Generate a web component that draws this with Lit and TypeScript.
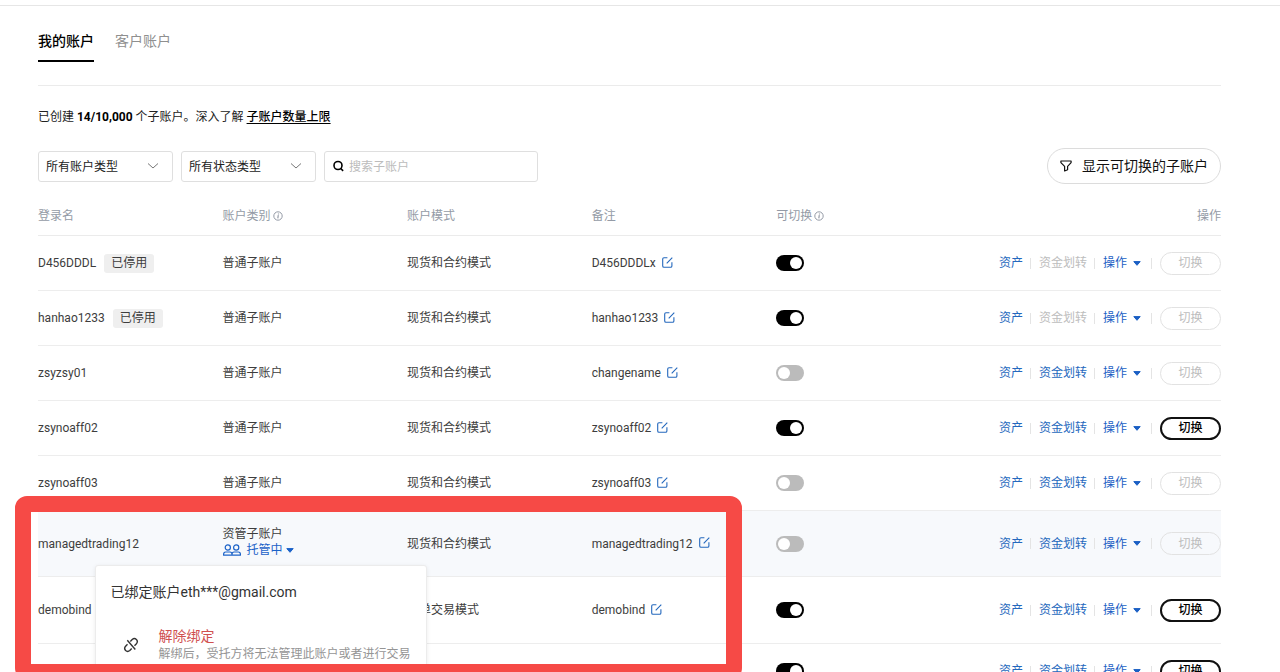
import { LitElement, html, css, svg, nothing } from "lit";
import { customElement, property, state } from "lit/decorators.js";
import { classMap } from "lit/directives/class-map.js";

interface Account {
  login: string;
  disabled?: boolean;
  kind: "" | "普通子账户" | "资管子账户";
  mode: string;
  note: string;
  switchable: boolean;
  transfer: boolean;
  canSwitch: boolean;
  size?: "tall" | "taller";
}

const PLAIN = "普通子账户";
const MANAGED = "资管子账户";
const SPOT = "现货和合约模式";
const ACCOUNTS: Account[] = [
  { login: "D456DDDL", disabled: true, kind: PLAIN, mode: SPOT, note: "D456DDDLx", switchable: true, transfer: false, canSwitch: false },
  { login: "hanhao1233", disabled: true, kind: PLAIN, mode: SPOT, note: "hanhao1233", switchable: true, transfer: false, canSwitch: false },
  { login: "zsyzsy01", kind: PLAIN, mode: SPOT, note: "changename", switchable: false, transfer: true, canSwitch: false },
  { login: "zsynoaff02", kind: PLAIN, mode: SPOT, note: "zsynoaff02", switchable: true, transfer: true, canSwitch: true },
  { login: "zsynoaff03", kind: PLAIN, mode: SPOT, note: "zsynoaff03", switchable: false, transfer: true, canSwitch: false },
  { login: "managedtrading12", kind: MANAGED, mode: SPOT, note: "managedtrading12", switchable: false, transfer: true, canSwitch: false, size: "tall" },
  { login: "demobind", kind: "", mode: "跟单交易模式", note: "demobind", switchable: true, transfer: true, canSwitch: true, size: "taller" },
  { login: "", kind: "", mode: "", note: "", switchable: true, transfer: true, canSwitch: true },
];

const SHAPES = {
  chevron: { w: 12, h: 6, body: svg`<path d="M1 .5 6 5 11 .5" stroke-width="1"/>` },
  caret: { w: 8, h: 5, body: svg`<path d="M.8.6h6.4L4 4.3z" fill="currentColor" stroke-width="1" stroke-linejoin="round"/>` },
  search: { w: 11, h: 12, body: svg`<circle cx="5" cy="5.5" r="4" stroke-width="1.6"/><path d="m7.800 8.500 2.300 2.400" stroke-width="1.6"/>` },
  filter: { w: 12, h: 12, body: svg`<path d="M.9 1h10.2v1.6L7.6 6.3v3.4L4.6 11V6.3L.9 2.6z" stroke-width="1.2" stroke-linejoin="round"/>` },
  info: { w: 10, h: 10, body: svg`<circle cx="5" cy="5" r="4.2" stroke-width="1"/><path d="M5.3 4.200 4.8 7.300M5.500 2.400v1.100" stroke-width="1.200"/>` },
  edit: { w: 11, h: 11, body: svg`<path d="M5.400.8H2Q.7.8.7 2v7q0 1.300 1.300 1.300h6.600q1.300 0 1.300-1.300V5.200M4.700 6.300 10.300.600" stroke-width="1.1"/>` },
  people: { w: 18, h: 12, body: svg`<circle cx="4.8" cy="3.5" r="2.6" stroke-width="1.200"/><circle cx="13.2" cy="3.5" r="2.6" stroke-width="1.200"/><path d="M.6 11.200v-.9Q.6 8 2.600 8H7q2 0 2 2.200v1zM9 11.200v-1Q9 8 11 8h4.400q2 0 2 2.200v1z" stroke-width="1.200" stroke-linejoin="round"/>` },
  unlink: { w: 16, h: 16, body: svg`<path d="m7.300 4.500 1.900-2q2.200-1.800 4.200 0 1.900 2.100 0 4.300l-1.900 1.900M8.700 11.500l-1.900 2q-2.200 1.800-4.200 0-1.900-2.100 0-4.300l1.900-1.900M4.300 3.300l8 9.200" stroke-width="1.400"/>` },
};

const icon = (name: keyof typeof SHAPES) => {
  const s = SHAPES[name];
  return html`<svg class="icon" width=${s.w} height=${s.h} viewBox="0 0 ${s.w} ${s.h}" fill="none" stroke="currentColor" aria-hidden="true">${s.body}</svg>`;
};

const base = css`
  * { box-sizing: border-box; }
  button, input, select { font: inherit; color: inherit; margin: 0; }
  button { padding: 0; border: 0; background: none; cursor: pointer; white-space: nowrap; }
  .icon { display: block; flex: none; }
`;

@customElement("filter-select")
export class FilterSelect extends LitElement {
  @property() label = "";
  static styles = [base, css`
    :host { display: block; width: 135px; }
    .box { display: grid; align-items: center; }
    .control, .arrow { grid-area: 1 / 1; }
    .control {
      appearance: none; width: 100%; height: 31px; padding: 1px 30px 0 7px;
      border: 1px solid #dfdfdf; border-radius: 3px; background: #fff; color: #222;
    }
    .arrow { justify-self: end; margin-right: 14px; color: #777; pointer-events: none; }
  `];
  render() {
    return html`<div class="box">
      <select class="control" aria-label=${this.label}><option>${this.label}</option></select>
      <span class="arrow">${icon("chevron")}</span>
    </div>`;
  }
}

@customElement("binding-popover")
export class BindingPopover extends LitElement {
  static styles = [base, css`
    :host {
      display: block; width: 332px; padding: 16px 15px 24px; color: #333;
      background: #fff; border: 1px solid #ececec; border-radius: 3px;
      box-shadow: 0 1px 4px rgba(0, 0, 0, .08);
    }
    .title { font-size: 14px; line-height: 20px; margin: 0 0 25px; }
    .action { display: flex; align-items: center; gap: 20px; padding-left: 12px; text-align: left; }
    .name { display: block; font-size: 14px; line-height: 18px; color: #d0504f; }
    .hint { display: block; line-height: 18px; color: #959595; }
  `];
  render() {
    return html`
      <p class="title">已绑定账户eth***@gmail.com</p>
      <button class="action">
        ${icon("unlink")}
        <span><span class="name">解除绑定</span><span class="hint">解绑后，受托方将无法管理此账户或者进行交易</span></span>
      </button>`;
  }
}

@customElement("account-table")
export class AccountTable extends LitElement {
  static styles = [base, css`
    :host { display: block; }
    .table { width: 100%; table-layout: fixed; border-collapse: separate; border-spacing: 0; }
    .col { width: 15.6%; }
    th {
      height: 40px; padding: 0; border-bottom: 1px solid #ebebeb;
      font-weight: 400; text-align: left; color: #949ba6;
    }
    td { height: 55px; padding: 0; border-bottom: 1px solid #ededed; color: #3d3d3d; }
    .tall td { height: 66px; background: #f7f9fc; }
    .taller td { height: 67px; }
    .end { text-align: right; }
    .inline { display: flex; align-items: center; }
    .info { gap: 2px; }
    .login { gap: 8px; }
    .note { gap: 6px; }
    .tag { padding: 0 7px; line-height: 19px; border-radius: 3px; background: #efefef; }
    .edit { padding-bottom: 2px; color: #2468bd; }
    .kind { position: relative; line-height: 16px; }
    .tall .kind { padding-bottom: 3px; }
    .trust { display: flex; align-items: center; gap: 3px; line-height: 16px; color: #1b62c8; }
    .people { margin-right: 3px; }
    .popover { position: absolute; z-index: 1; top: calc(100% + 4px); left: -128px; }
    .switch {
      display: block; appearance: none; width: 28px; height: 16px; padding: 2px;
      border-radius: 8px; background: #bbb; cursor: pointer;
    }
    .switch::before { content: ""; display: block; width: 12px; height: 12px; border-radius: 50%; background: #fff; }
    .switch:checked { background: #000; }
    .switch:checked::before { margin-left: 12px; }
    .actions { display: flex; align-items: center; justify-content: flex-end; color: #2468bd; }
    .bar { width: 1px; height: 11px; margin: 0 8px 0 7px; background: #e4e4e4; }
    .link:disabled { color: #bdbdbd; cursor: default; }
    .menu { display: flex; align-items: center; gap: 6px; padding-right: 3px; color: #1b5fc4; }
    .go { width: 61px; height: 23px; border: 2px solid #111; border-radius: 12px; color: #000; font-weight: 500; background: transparent; }
    .go:disabled { border: 1px solid #e2e2e2; color: #bdbdbd; font-weight: 400; cursor: default; }
  `];

  private row(a: Account) {
    return html`<tr class=${a.size ?? ""}>
      <td><div class="inline login">${a.login}${a.disabled ? html`<span class="tag">已停用</span>` : nothing}</div></td>
      <td><div class="kind">
        ${a.kind}
        ${a.kind === MANAGED
          ? html`<button class="trust" aria-expanded="true"><span class="people">${icon("people")}</span>托管中${icon("caret")}</button>
              <binding-popover class="popover"></binding-popover>`
          : nothing}
      </div></td>
      <td>${a.mode}</td>
      <td>${a.note ? html`<div class="inline note">${a.note}<button class="edit" aria-label="编辑备注">${icon("edit")}</button></div>` : nothing}</td>
      <td><input class="switch" type="checkbox" role="switch" aria-label="可切换" .checked=${a.switchable} /></td>
      <td><div class="actions">
        <button class="link">资产</button><span class="bar"></span>
        <button class="link" ?disabled=${!a.transfer}>资金划转</button><span class="bar"></span>
        <button class="menu">操作${icon("caret")}</button><span class="bar"></span>
        <button class="go" ?disabled=${!a.canSwitch}>切换</button>
      </div></td>
    </tr>`;
  }

  render() {
    return html`<table class="table">
      <colgroup><col class="col" /><col class="col" /><col class="col" /><col class="col" /><col class="col" /><col /></colgroup>
      <thead><tr>
        <th scope="col">登录名</th>
        <th scope="col"><div class="inline info">账户类别${icon("info")}</div></th>
        <th scope="col">账户模式</th>
        <th scope="col">备注</th>
        <th scope="col"><div class="inline info">可切换${icon("info")}</div></th>
        <th scope="col" class="end">操作</th>
      </tr></thead>
      <tbody>${ACCOUNTS.map((a) => this.row(a))}</tbody>
    </table>`;
  }
}

@customElement("app-root")
export class AppRoot extends LitElement {
  @state() private tab = 0;

  static styles = [base, css`
    :host {
      display: block; position: relative; height: 100vh; overflow: hidden; background: #fff; color: #222;
      font: 12px/18px Roboto, "Noto Sans CJK SC", sans-serif;
    }
    .topline { height: 6px; border-bottom: 1px solid #e6e6e6; }
    .page { padding: 25px 59px 0 38px; }
    .tabs { display: flex; gap: 21px; padding-bottom: 23px; border-bottom: 1px solid #ebebeb; }
    .tab { font-size: 14px; line-height: 20px; padding-bottom: 9px; border-bottom: 2px solid transparent; color: #8f8f8f; }
    .tab.active { color: #000; font-weight: 500; border-bottom-color: #000; }
    .summary { margin: 22px 0; }
    .strong { color: #000; font-weight: 700; }
    .limit { color: #000; font-weight: 500; text-underline-offset: 2px; }
    .filters { display: flex; align-items: center; gap: 8px; }
    .search {
      display: flex; align-items: center; gap: 5px; width: 214px; height: 31px; padding: 0 8px;
      border: 1px solid #dfdfdf; border-radius: 3px; color: #000;
    }
    .field { flex: 1; min-width: 0; padding: 1px 0 0; border: 0; outline: 0; background: none; }
    .field::placeholder { color: #bcbcbc; }
    .show {
      display: flex; align-items: center; gap: 10px; height: 36px; margin-left: auto; padding: 0 12px;
      border: 1px solid #dcdcdc; border-radius: 18px; font-size: 14px; color: #111;
    }
    .list { margin-top: 12px; }
    .marker {
      position: absolute; z-index: 2; left: 15px; top: 496px; width: 727px; height: 184px;
      border: 16px solid #f64a46; border-radius: 12px; pointer-events: none;
    }
  `];

  render() {
    return html`
      <div class="topline"></div>
      <main class="page">
        <nav class="tabs">
          ${["我的账户", "客户账户"].map((t, i) => html`<button class=${classMap({ tab: true, active: i === this.tab })} @click=${() => (this.tab = i)}>${t}</button>`)}
        </nav>
        <p class="summary">已创建 <b class="strong">14/10,000</b> 个子账户。深入了解 <a class="limit" href="#limit">子账户数量上限</a></p>
        <div class="filters">
          <filter-select label="所有账户类型"></filter-select>
          <filter-select label="所有状态类型"></filter-select>
          <label class="search">${icon("search")}<input class="field" type="text" placeholder="搜索子账户" aria-label="搜索子账户" /></label>
          <button class="show">${icon("filter")}显示可切换的子账户</button>
        </div>
        <account-table class="list"></account-table>
      </main>
      <div class="marker"></div>`;
  }
}
